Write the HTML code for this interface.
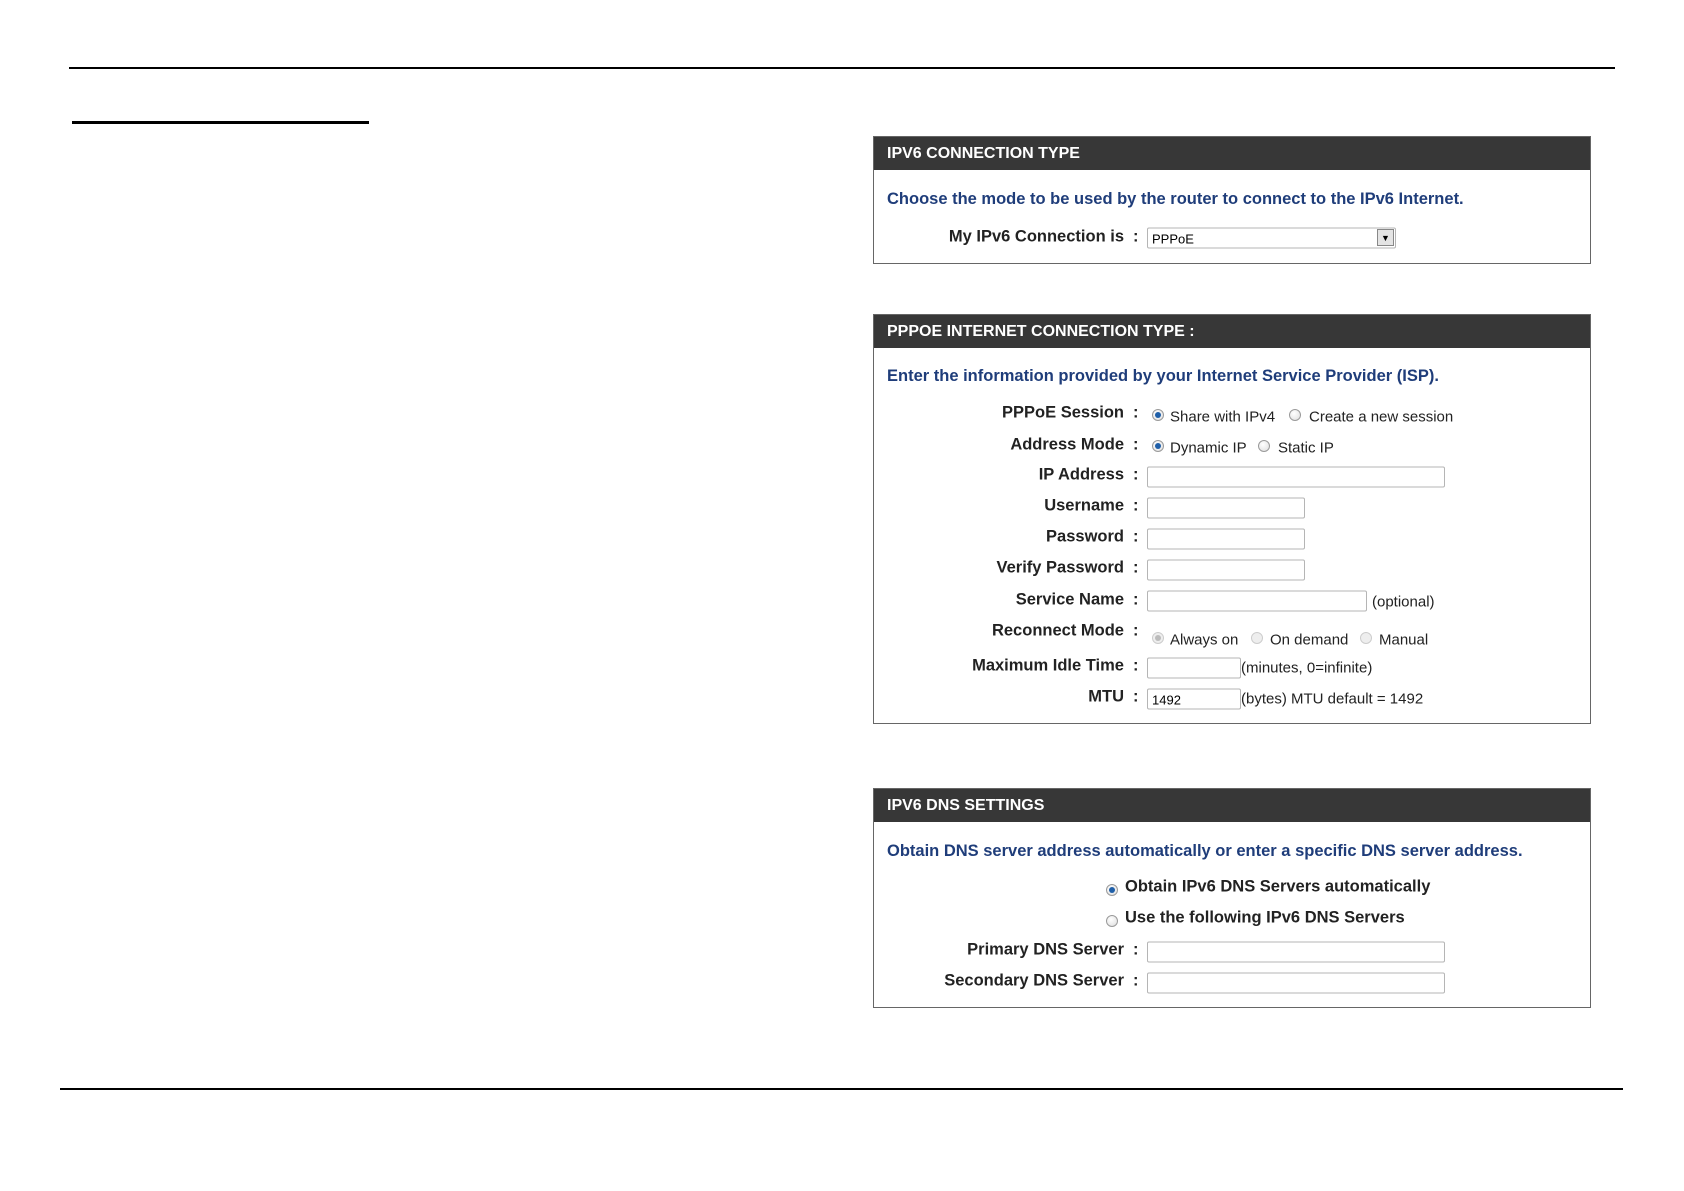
<!DOCTYPE html>
<html><head><meta charset="utf-8"><style>
body{margin:0;width:1684px;height:1191px;background:#fff;position:relative;font-family:"Liberation Sans",sans-serif;overflow:hidden}
.a{position:absolute}
.hl{position:absolute;background:#000}
.panel{position:absolute;left:873px;width:716px;border:1px solid #666;background:#fff}
.hd{background:#373737;color:#fff;font-weight:bold;font-size:16px;height:33px;line-height:33px;padding-left:13px;letter-spacing:0}
.blue{position:absolute;left:887px;color:#1f3d7a;font-weight:bold;font-size:16.5px;letter-spacing:0;white-space:nowrap}
.lb{position:absolute;right:560px;font-weight:bold;font-size:16.5px;color:#222;white-space:nowrap;transform:translateY(-50%)}
.co{position:absolute;left:1133px;font-weight:bold;font-size:16.5px;color:#222;transform:translateY(-50%)}
.in{position:absolute;left:1147px;height:21px;border:1px solid #b5b5b5;border-radius:2px;background:#fff;transform:translateY(-50%);font-size:13px;line-height:21px;padding-left:4px;box-sizing:border-box}
.tx{position:absolute;font-size:15px;color:#222;white-space:nowrap;transform:translateY(-50%)}
.r{position:absolute;width:12px;height:12px;border-radius:50%;border:1px solid #9a9a9a;background:radial-gradient(circle at 40% 35%,#fff,#ddd);transform:translateY(-50%);box-sizing:border-box}
.r.on::after{content:"";position:absolute;left:2px;top:2px;width:6px;height:6px;border-radius:50%;background:#1f5fa8}
.r.dis{border-color:#ccc;background:#eee}
.r.dis.on::after{background:#bbb}
</style></head><body>
<div class="hl" style="left:69px;top:67px;width:1546px;height:1.5px"></div>
<div class="hl" style="left:72px;top:121px;width:297px;height:3px"></div>
<div class="hl" style="left:60px;top:1088px;width:1563px;height:1.5px"></div>

<div class="panel" style="top:136px;height:126px"><div class="hd">IPV6 CONNECTION TYPE</div></div>
<div class="blue" style="top:190px">Choose the mode to be used by the router to connect to the IPv6 Internet.</div>
<div class="lb" style="top:237px">My IPv6 Connection is</div><div class="co" style="top:237px">:</div>
<div class="in" style="top:238px;width:249px;height:21px">PPPoE</div>
<div class="a" style="left:1377px;top:229px;width:17px;height:17px;border:1px solid #888;background:#e4e4e4;box-sizing:border-box;font-size:9px;text-align:center;line-height:16px">▼</div>

<div class="panel" style="top:314px;height:408px"><div class="hd">PPPOE INTERNET CONNECTION TYPE :</div></div>
<div class="blue" style="top:367px">Enter the information provided by your Internet Service Provider (ISP).</div>

<div class="lb" style="top:413px">PPPoE Session</div><div class="co" style="top:413px">:</div>
<div class="r on" style="left:1152px;top:415px"></div><div class="tx" style="left:1170px;top:417px">Share with IPv4</div>
<div class="r" style="left:1289px;top:415px"></div><div class="tx" style="left:1309px;top:417px">Create a new session</div>

<div class="lb" style="top:445px">Address Mode</div><div class="co" style="top:445px">:</div>
<div class="r on" style="left:1152px;top:446px"></div><div class="tx" style="left:1170px;top:448px">Dynamic IP</div>
<div class="r" style="left:1258px;top:446px"></div><div class="tx" style="left:1278px;top:448px">Static IP</div>

<div class="lb" style="top:475px">IP Address</div><div class="co" style="top:475px">:</div><div class="in" style="top:477px;width:298px"></div>
<div class="lb" style="top:506px">Username</div><div class="co" style="top:506px">:</div><div class="in" style="top:508px;width:158px"></div>
<div class="lb" style="top:537px">Password</div><div class="co" style="top:537px">:</div><div class="in" style="top:539px;width:158px"></div>
<div class="lb" style="top:568px">Verify Password</div><div class="co" style="top:568px">:</div><div class="in" style="top:570px;width:158px"></div>
<div class="lb" style="top:600px">Service Name</div><div class="co" style="top:600px">:</div><div class="in" style="top:601px;width:220px"></div>
<div class="tx" style="left:1372px;top:602px">(optional)</div>

<div class="lb" style="top:631px">Reconnect Mode</div><div class="co" style="top:631px">:</div>
<div class="r dis on" style="left:1152px;top:638px"></div><div class="tx" style="left:1170px;top:640px">Always on</div>
<div class="r dis" style="left:1251px;top:638px"></div><div class="tx" style="left:1270px;top:640px">On demand</div>
<div class="r dis" style="left:1360px;top:638px"></div><div class="tx" style="left:1379px;top:640px">Manual</div>

<div class="lb" style="top:666px">Maximum Idle Time</div><div class="co" style="top:666px">:</div><div class="in" style="top:668px;width:94px"></div>
<div class="tx" style="left:1241px;top:668px">(minutes, 0=infinite)</div>
<div class="lb" style="top:697px">MTU</div><div class="co" style="top:697px">:</div><div class="in" style="top:699px;width:94px">1492</div>
<div class="tx" style="left:1241px;top:699px">(bytes) MTU default = 1492</div>

<div class="panel" style="top:788px;height:218px"><div class="hd">IPV6 DNS SETTINGS</div></div>
<div class="blue" style="top:842px">Obtain DNS server address automatically or enter a specific DNS server address.</div>
<div class="r on" style="left:1106px;top:890px"></div><div class="tx" style="left:1125px;top:887px;font-weight:bold;font-size:16.5px">Obtain IPv6 DNS Servers automatically</div>
<div class="r" style="left:1106px;top:921px"></div><div class="tx" style="left:1125px;top:918px;font-weight:bold;font-size:16.5px">Use the following IPv6 DNS Servers</div>
<div class="lb" style="top:950px">Primary DNS Server</div><div class="co" style="top:950px">:</div><div class="in" style="top:952px;width:298px"></div>
<div class="lb" style="top:981px">Secondary DNS Server</div><div class="co" style="top:981px">:</div><div class="in" style="top:983px;width:298px"></div>
</body></html>
